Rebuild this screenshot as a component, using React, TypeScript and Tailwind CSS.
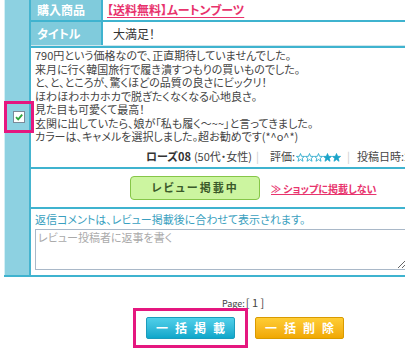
import React from 'react';

const FONT = { fontFamily: '"Noto Sans CJK JP", "Liberation Sans", sans-serif' };

function CheckBox() {
  return (
    <svg width="12" height="12" viewBox="0 0 12 12">
      <rect x="0.5" y="0.5" width="11" height="11" fill="#ffffff" stroke="#7a8a99" />
      <path d="M3 6.2 L5.2 8.4 L9.2 3.6" fill="none" stroke="#2fa33a" strokeWidth="1.8" />
    </svg>
  );
}

function Star({ filled }: { filled: boolean }) {
  return (
    <svg width="9" height="9" viewBox="0 0 10 10" className="inline-block">
      <path
        d="M5 0.6 L6.2 3.7 L9.5 3.8 L6.9 5.8 L7.8 9.2 L5 7.3 L2.2 9.2 L3.1 5.8 L0.5 3.8 L3.8 3.7 Z"
        fill={filled ? '#1aa3c9' : 'none'}
        stroke="#1aa3c9"
        strokeWidth="0.9"
        strokeLinejoin="round"
      />
    </svg>
  );
}

function HeaderRow({ label, children }: { label: string; children: React.ReactNode }) {
  return (
    <div className="flex h-[22px] border-b-2 border-[#3fb3cf]">
      <div className="w-[72px] shrink-0 bg-[#80cbdc] border-r-2 border-[#3fb3cf] text-white font-bold text-[12px] flex items-center pl-[6px]">
        {label}
      </div>
      <div className="flex-1 flex items-center pl-[4px] text-[12px]">{children}</div>
    </div>
  );
}

const reviewLines = [
  '790円という価格なので、正直期待していませんでした。',
  '来月に行く韓国旅行で履き潰すつもりの買いものでした。',
  'と、と、ところが、驚くほどの品質の良さにビックリ！',
  'ほわほわホカホカで脱ぎたくなくなる心地良さ。',
  '見た目も可愛くて最高！',
  '玄関に出していたら、娘が「私も履く～~~」と言ってきました。',
  'カラーは、キャメルを選択しました。超お勧めです(*^o^*)',
];

export default function App() {
  return (
    <div
      className="w-[405px] h-[352px] overflow-hidden bg-white text-[#333] [font-feature-settings:'palt'] relative"
      style={FONT}
    >
      {/* review table */}
      <div className="flex w-[430px] ml-[4px] border-b-2 border-[#3fb3cf]">
        <div className="w-[27px] shrink-0 bg-[#8dd1e1] border-l border-[#d3eff5] border-r-2 border-r-[#45b4cf] relative">
          <div className="absolute left-[-1px] top-[101px] w-[30px] h-[32px] border-[3px] border-[#e5177f] flex items-center justify-center">
            <CheckBox />
          </div>
        </div>

        <div className="flex-1 min-w-0">
          <HeaderRow label="購入商品">
            <span className="text-[#e8336d] font-bold underline underline-offset-2">【送料無料】ムートンブーツ</span>
          </HeaderRow>
          <div className="flex h-[23px]">
            <div className="w-[72px] shrink-0 bg-[#80cbdc] border-r-2 border-[#3fb3cf] text-white font-bold text-[12px] flex items-center pl-[6px]">
              タイトル
            </div>
            <div className="flex-1 flex items-center pl-[10px] text-[12px]">大満足！</div>
          </div>
          <div className="h-[1px] bg-[#cfe6ec]" />
          <div className="h-[2px] bg-[#3fb3cf]" />

          <div className="px-[4px] pt-[1px] text-[11px] leading-[13.5px] text-[#444]">
            {reviewLines.map((l) => (
              <div key={l} className="whitespace-nowrap">{l}</div>
            ))}
            <div className="whitespace-nowrap pl-[111px] mt-[4px] h-[19px] flex items-center">
              <span className="font-bold text-[#333]">ローズ08</span>
              <span className="ml-[3px]">(50代・女性)</span>
              <span className="text-[#ccc] ml-[4px]">|</span>
              <span className="ml-[11px]">評価:</span>
              <span className="ml-[1px] flex items-center">
                <Star filled={false} />
                <Star filled={false} />
                <Star filled={false} />
                <Star filled />
                <Star filled />
              </span>
              <span className="text-[#ccc] ml-[6px]">|</span>
              <span className="ml-[7px]">投稿日時:2011/01/20</span>
            </div>
          </div>
          <div className="h-[2px] bg-[#3fb3cf]" />

          <div className="h-[38px] flex items-center pl-[99px] gap-[11px]">
            <div className="w-[130px] h-[24px] rounded-[4px] bg-[#ccf5a0] border border-[#86c648] flex items-center justify-center text-[11px] font-bold tracking-[2px] text-[#3a5a2a]">
              レビュー掲載中
            </div>
            <span className="text-[10px] font-bold text-[#e8336d] underline mt-[2px]">≫ ショップに掲載しない</span>
          </div>
          <div className="h-[2px] bg-[#3fb3cf]" />

          <div className="pl-[4px] pt-[3px] pb-[5px]">
            <div className="text-[11px] leading-[14px] text-[#3a9fc0] whitespace-nowrap">
              返信コメントは、レビュー掲載後に合わせて表示されます。
            </div>
            <textarea
              className="mt-[3px] block w-[372px] h-[41px] border border-[#a9b8c8] px-[2px] py-0 text-[11px] leading-[14px] text-[#666] placeholder:text-[#aaa] outline-none"
              style={FONT}
              placeholder="レビュー投稿者に返事を書く"
            />
          </div>
        </div>
      </div>

      {/* pager */}
      <div className="mt-[21px] h-[10px] flex pl-[222px] items-end text-[#444] leading-none">
        <span className="text-[9px]">Page:</span>
        <span className="text-[11px] ml-[1px]">[ 1 ]</span>
      </div>

      {/* bulk buttons */}
      <div className="flex pl-[133px] items-center">
        <div className="border-[3px] border-[#e5177f] px-[10px] py-[6px]">
          <div className="w-[89px] h-[22px] rounded-[2px] border border-[#1b9cbc] bg-gradient-to-b from-[#4fd0ea] to-[#0ba7ca] text-white font-bold text-[12px] tracking-[7px] pl-[7px] flex items-center justify-center">
            一括掲載
          </div>
        </div>
        <div className="ml-[7px] w-[89px] h-[22px] rounded-[2px] border border-[#d99a00] bg-gradient-to-b from-[#ffcd33] to-[#f0a800] text-white font-bold text-[12px] tracking-[7px] pl-[7px] flex items-center justify-center">
          一括削除
        </div>
      </div>
    </div>
  );
}
